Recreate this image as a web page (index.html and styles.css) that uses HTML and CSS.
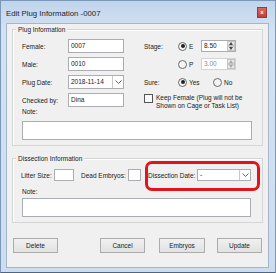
FILE: index.html
```html
<!DOCTYPE html>
<html>
<head>
<meta charset="utf-8">
<link rel="stylesheet" href="styles.css">
</head>
<body>
<div class="window">
  <div class="titlebar">
    <span class="title">Edit Plug Information -0007</span>
    <span class="close">x</span>
  </div>
  <div class="client">
    <div class="group plug">
      <div class="group-title">Plug Information</div>
      <div class="plug-cols">
        <div class="col-left">
          <div class="row"><span class="lbl">Female:</span><span class="input w56">0007</span></div>
          <div class="row"><span class="lbl">Male:</span><span class="input w56">0010</span></div>
          <div class="row"><span class="lbl">Plug Date:</span><span class="input combo w56"><span class="combo-text">2018-11-14</span><span class="drop"><svg width="7" height="4" viewBox="0 0 7 4"><path d="M0.5 0.5 L3.5 3.5 L6.5 0.5" fill="none" stroke="#666" stroke-width="1"/></svg></span></span></div>
          <div class="row"><span class="lbl">Checked by:</span><span class="input w56">Dina</span></div>
        </div>
        <div class="col-right">
          <div class="row">
            <span class="lbl-r">Stage:</span><span class="radio on"></span><span class="rl">E</span>
            <span class="spin"><span class="spin-text">8.50</span><span class="spin-btns"><span class="sb"><svg width="4" height="3" viewBox="0 0 4 3"><path d="M0 3 L2 0 L4 3 Z" fill="#444"/></svg></span><span class="sb"><svg width="4" height="3" viewBox="0 0 4 3"><path d="M0 0 L2 3 L4 0 Z" fill="#444"/></svg></span></span></span>
          </div>
          <div class="row">
            <span class="lbl-r"></span><span class="radio"></span><span class="rl">P</span>
            <span class="spin disabled"><span class="spin-text">3.00</span><span class="spin-btns"><span class="sb"><svg width="4" height="3" viewBox="0 0 4 3"><path d="M0 3 L2 0 L4 3 Z" fill="#aaa"/></svg></span><span class="sb"><svg width="4" height="3" viewBox="0 0 4 3"><path d="M0 0 L2 3 L4 0 Z" fill="#aaa"/></svg></span></span></span>
          </div>
          <div class="row">
            <span class="lbl-r">Sure:</span><span class="radio on"></span><span class="rl yes">Yes</span><span class="radio"></span><span class="rl">No</span>
          </div>
          <div class="check-row">
            <span class="checkbox"></span>
            <span class="check-text">Keep Female (Plug will not be<br>Shown on Cage or Task List)</span>
          </div>
        </div>
      </div>
      <div class="note-label">Note:</div>
      <div class="note-box"></div>
    </div>

    <div class="group dissect">
      <div class="group-title">Dissection Information</div>
      <div class="d-row">
        <span class="d-lbl litter">Litter Size:</span><span class="input small w19"></span>
        <span class="d-lbl dead">Dead Embryos:</span><span class="input small w12"></span>
        <span class="d-lbl ddate">Dissection Date:</span><span class="input small combo w54"><span class="combo-text">-</span><span class="drop"><svg width="7" height="4" viewBox="0 0 7 4"><path d="M0.5 0.5 L3.5 3.5 L6.5 0.5" fill="none" stroke="#666" stroke-width="1"/></svg></span></span>
      </div>
      <div class="note-label d-note">Note:</div>
      <div class="note-box d-box"></div>
    </div>

    <div class="buttons">
      <span class="btn">Delete</span>
      <span class="btn cancel">Cancel</span>
      <span class="btn embryos">Embryos</span>
      <span class="btn update">Update</span>
    </div>
  </div>
  <div class="annot"></div>
</div>
</body>
</html>
```
FILE: styles.css
```css
* { box-sizing: border-box; }
html, body { margin: 0; padding: 0; background: #fff; }
body {
  font-family: "Liberation Sans", Arial, sans-serif;
  font-size: 6.5px;
  color: #1a1a1a;
}
.window {
  position: relative;
  width: 276px;
  height: 273px;
  border: 1px solid #7d97b8;
  border-bottom-color: #4f6680;
  background: linear-gradient(#bfd4ec, #d4e3f3 30px, #cddcef);
}
.titlebar {
  height: 22px;
  display: flex;
  align-items: center;
  padding-left: 5px;
}
.title {
  font-size: 7.8px;
  color: #1e1e1e;
  margin-top: 2px;
}
.close {
  margin-left: auto;
  margin-right: 8px;
  align-self: flex-start;
  margin-top: 6px;
  width: 10px;
  height: 11px;
  background: linear-gradient(#d66a62, #c0403a);
  border: 1px solid #9a3a36;
  color: #fff;
  font-size: 6px;
  font-weight: bold;
  line-height: 8px;
  text-align: center;
}
.client {
  margin-left: 5px;
  width: 263px;
  height: 245px;
  background: #f0f0f0;
  border: 1px solid #a3b6cc;
  padding: 5px 0 0 5px;
}
.group {
  width: 251px;
  border: 1px solid #d5d5d5;
  box-shadow: inset 1px 1px 0 #fff;
}
.group-title {
  width: max-content;
  margin: -5px 0 0 3px;
  padding: 0 2px;
  height: 9px;
  line-height: 9px;
  background: #f0f0f0;
}
.plug { padding-bottom: 5px; }
.plug-cols {
  display: flex;
  margin-top: 3px;
}
.col-left {
  width: 131px;
  padding-left: 9px;
}
.row {
  height: 18px;
  display: flex;
  align-items: center;
}
.lbl { width: 46px; }
.input {
  display: flex;
  align-items: center;
  height: 14px;
  background: #fff;
  border: 1px solid #abadb3;
  padding-left: 2px;
  line-height: 10px;
}
.w56 { width: 56px; }
.combo { padding-right: 0; }
.combo-text { flex: 1; }
.drop {
  width: 11px;
  height: 100%;
  border-left: 1px solid #c8c8c8;
  display: flex;
  align-items: center;
  justify-content: center;
}
.col-right {
  display: flex;
  flex-direction: column;
}
.lbl-r { width: 34px; }
.radio {
  width: 9px;
  height: 9px;
  border-radius: 50%;
  border: 1px solid #6a6a6a;
  background: #f4f4f4;
  margin-right: 2px;
  position: relative;
}
.radio.on::after {
  content: "";
  position: absolute;
  left: 1.5px;
  top: 1.5px;
  width: 4px;
  height: 4px;
  border-radius: 50%;
  background: #222;
}
.rl { width: 12px; }
.rl.yes { width: 24px; }
.spin {
  display: flex;
  width: 35px;
  height: 12px;
  background: #fff;
  border: 1px solid #abadb3;
}
.spin-text {
  flex: 1;
  padding-left: 2px;
  line-height: 10px;
}
.spin.disabled { border-color: #d3d3d3; }
.spin.disabled .spin-text { color: #8c8c8c; }
.spin-btns {
  width: 8px;
  display: flex;
  flex-direction: column;
}
.sb {
  flex: 1;
  display: flex;
  align-items: center;
  justify-content: center;
  background: #e8e8e8;
  border: 0.5px solid #c4c4c4;
}
.check-row {
  display: flex;
  margin-top: 3px;
}
.checkbox {
  width: 9px;
  height: 9px;
  border: 1px solid #555;
  background: #fafafa;
  margin-right: 3px;
}
.check-text { line-height: 8px; }
.note-label {
  margin: -2px 0 0 9px;
  line-height: 8px;
}
.note-box {
  margin: 5px 0 0 9px;
  width: 230px;
  height: 19px;
  background: #fff;
  border: 1px solid #abadb3;
}
.dissect {
  margin-top: 12px;
  padding-bottom: 5px;
}
.d-row {
  display: flex;
  align-items: center;
  margin-top: 6px;
  padding-left: 8px;
  height: 12px;
}
.input.small { height: 12px; }
.w19 { width: 20px; }
.w12 { width: 13px; }
.w54 { width: 54px; }
.d-lbl.litter { width: 33px; }
.d-lbl.dead { width: 47px; margin-left: 7px; }
.d-lbl.ddate { width: 49px; margin-left: 7px; }
.d-note { margin-top: 7px; }
.d-box { margin-top: 2px; width: 229px; }
.buttons {
  display: flex;
  margin-top: 15px;
  padding-left: 1px;
}
.btn {
  width: 45px;
  height: 15px;
  border: 1px solid #acacac;
  background: linear-gradient(#f0f0f0, #e2e2e2);
  display: flex;
  align-items: center;
  justify-content: center;
}
.btn.cancel { margin-left: 42px; }
.btn.embryos { margin-left: 14px; width: 46px; }
.btn.update { margin-left: 12px; }
.annot {
  position: absolute;
  left: 144px;
  top: 160px;
  width: 115px;
  height: 30px;
  border: 3px solid #e0141c;
  border-radius: 7px;
}
```
